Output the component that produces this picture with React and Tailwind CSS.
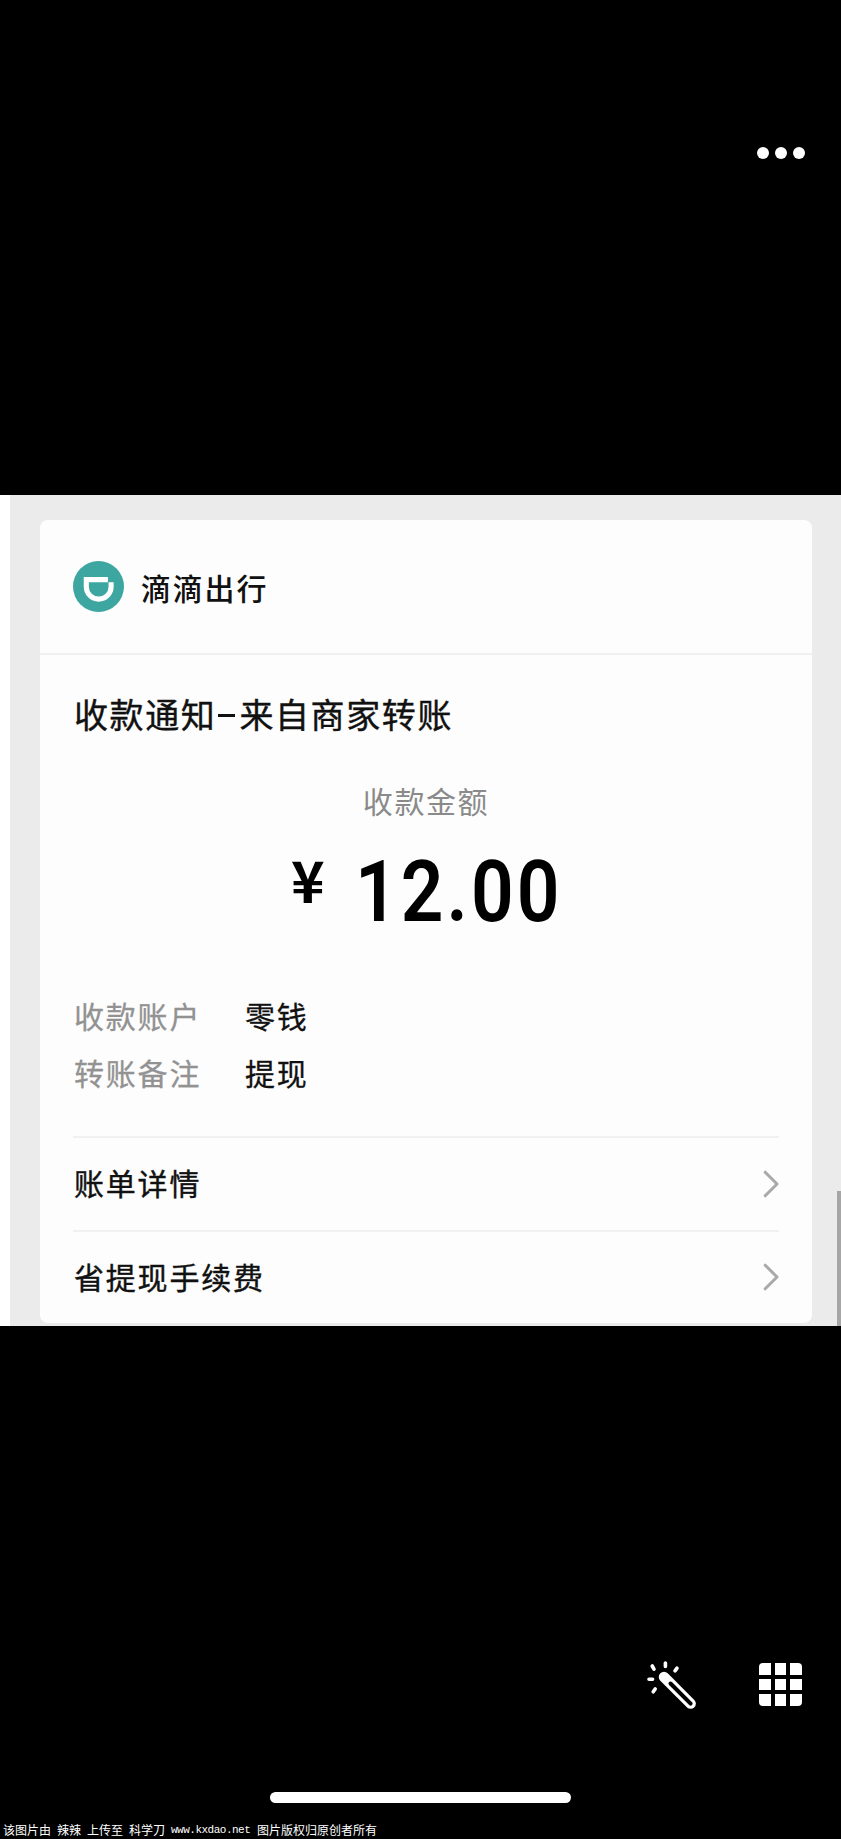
import React from 'react';

const details = [
  { label: '收款账户', value: '零钱' },
  { label: '转账备注', value: '提现' },
];

const links = ['账单详情', '省提现手续费'];

const DidiLogo = () => (
  <svg className="w-[51px] h-[51px] shrink-0" viewBox="0 0 51 51">
    <circle cx="25.5" cy="25.5" r="25.5" fill="#3ea6a1" />
    <path
      d="M34.9 18.6H13.3V25.7a12.4 12.4 0 0 0 24.8 0V21.2"
      fill="none"
      stroke="#fff"
      strokeWidth="5.1"
    />
  </svg>
);

const Chevron = () => (
  <svg className="w-[16px] h-[28px]" viewBox="0 0 16 28" fill="none">
    <path d="M2.2 2.2 14 14 2.2 25.8" stroke="#a9a9a9" strokeWidth="3" strokeLinecap="round" strokeLinejoin="round" />
  </svg>
);

const Wand = () => (
  <svg className="w-[50px] h-[50px]" viewBox="0 0 50 50" fill="none" stroke="#fff">
    <path d="M18.4 3v3.4M5.2 6l1.8 3.2M30 8.2 28 10.8M2 19.2h3.6M8.2 29l-2 2.8" strokeWidth="3.6" strokeLinecap="round" />
    <path d="M17 17 43.6 43.6" strokeWidth="10.5" strokeLinecap="round" />
    <path d="M23.5 23.5 43.6 43.6" stroke="#000" strokeWidth="4" strokeLinecap="round" />
  </svg>
);

const App = () => {
  return (
    <div className="flex flex-col w-[841px] h-[1839px] overflow-hidden bg-black text-[#111] font-['Noto_Sans_CJK_SC',sans-serif]">
      <div className="flex justify-end h-[495px] shrink-0 pt-[146.5px] pr-[36.5px] gap-[6px]">
        <span className="w-3 h-3 rounded-full bg-white" />
        <span className="w-3 h-3 rounded-full bg-white" />
        <span className="w-3 h-3 rounded-full bg-white" />
      </div>

      <div className="relative h-[831px] shrink-0 bg-[#ebebeb] border-l-[10px] border-white pt-[25px] pl-[30px] pr-[29px]">
        <div className="h-[803px] rounded-lg bg-[#fdfdfd]">
          <div className="flex items-center h-[135px] pl-[33px] gap-[17px] border-b-2 border-[#f0f0f0]">
            <DidiLogo />
            <span className="text-[30px] leading-[44px] tracking-[1.8px] font-medium">滴滴出行</span>
          </div>

          <div className="px-[33px]">
            <h1 className="pt-[34px] pl-px text-[34px] leading-[50px] tracking-[1.6px] [-webkit-text-stroke:0.4px_#111]">
              收款通知<span className="inline-block w-[17px] h-[3px] ml-[2px] mr-[4px] mb-[11px] align-baseline bg-[#111]" />来自商家转账
            </h1>

            <p className="mt-[39px] text-center text-[30px] leading-[44px] tracking-[1.6px] text-[#8a8a8a]">收款金额</p>

            <div className="flex mt-[15px] pl-[218px] h-[100px] text-black">
              <span className="w-[64px] text-[57px] leading-[83px] font-bold">¥</span>
              <span className="mt-[5px] font-['Roboto',sans-serif] font-semibold text-[85px] leading-[100px] tracking-[3.5px] origin-left scale-x-[0.88]">
                12.00
              </span>
            </div>

            <div className="mt-[49px] h-[150px] [-webkit-text-stroke:0.3px]">
              {details.map((row) => (
                <div key={row.label} className="flex h-[57.5px] items-center text-[30px] leading-[44px] tracking-[1.8px]">
                  <span className="w-[172px] pl-px text-[#929292]">{row.label}</span>
                  <span>{row.value}</span>
                </div>
              ))}
            </div>

            {links.map((text) => (
              <div key={text} className="flex items-center justify-between h-[93.5px] border-t-2 border-[#f1f1f1]">
                <span className="pl-px pb-[3px] text-[30px] leading-[44px] tracking-[1.8px] [-webkit-text-stroke:0.4px]">{text}</span>
                <Chevron />
              </div>
            ))}
          </div>
        </div>

        {/* scrollbar thumb */}
        <div className="absolute right-0 bottom-0 w-1 h-[135px] bg-[#a6a6a6]" />
      </div>

      <div className="flex justify-end h-[466px] shrink-0 pt-[334px] pr-[39px] gap-[62px]">
        <Wand />
        <div className="grid grid-cols-3 gap-1 w-[43px] h-[43px] mt-[3px] rounded-[4px] overflow-hidden">
          {Array.from({ length: 9 }, (_, i) => (
            <span key={i} className="bg-white" />
          ))}
        </div>
      </div>

      <div className="w-[301px] h-[11px] ml-[270px] shrink-0 rounded-full bg-white" />

      <p className="flex mt-[17px] pl-[3px] text-[12px] leading-[20px] text-white whitespace-pre">
        <span className="w-[54px]">该图片由</span>
        <span className="w-[30px]">辣辣</span>
        <span className="w-[42px]">上传至</span>
        <span className="w-[42px]">科学刀</span>
        <span className="w-[86px] font-['Liberation_Mono',monospace] text-[11px] tracking-[-0.5px]">www.kxdao.net</span>
        <span>图片版权归原创者所有</span>
      </p>
    </div>
  );
};

export default App;
